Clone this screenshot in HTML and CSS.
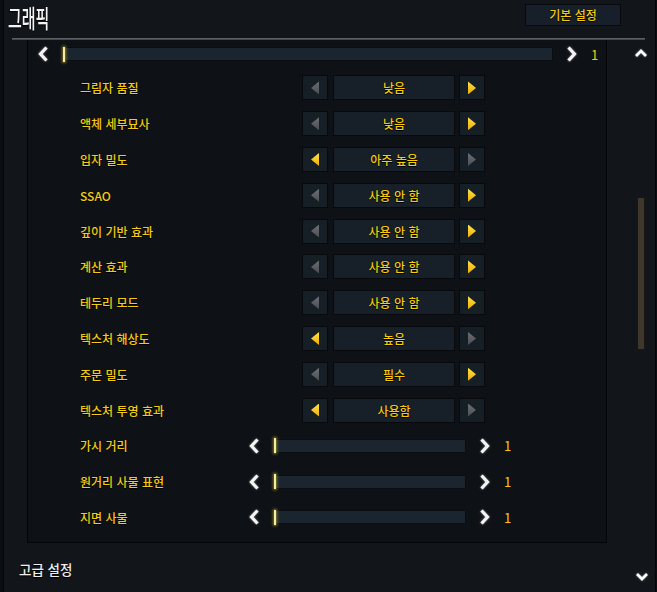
FILE: index.html
```html
<!DOCTYPE html>
<html lang="ko">
<head>
<meta charset="UTF-8">
<title>그래픽</title>
<link rel="stylesheet" href="styles.css">
</head>
<body>
<div class="window">
    <div class="header">
        <h1 class="title">그래픽</h1>
        <div class="btn-default">기본 설정</div>
    </div>
    <div class="rule"></div>

    <div class="main">
        <div class="panel">
            <div class="slider top">
                <svg class="chev" viewBox="0 0 10 16"><polyline points="8.5,1.5 2.5,8 8.5,14.5"/></svg>
                <div class="track wide"><span class="thumb"></span></div>
                <svg class="chev" viewBox="0 0 10 16"><polyline points="1.5,1.5 7.5,8 1.5,14.5"/></svg>
                <span class="num">1</span>
            </div>

            <div class="list">
                <div class="row">
                    <span class="label">그림자 품질</span>
                    <div class="sel-btn"><span class="tri left off"></span></div>
                    <div class="sel-value">낮음</div>
                    <div class="sel-btn"><span class="tri right"></span></div>
                </div>
                <div class="row">
                    <span class="label">액체 세부묘사</span>
                    <div class="sel-btn"><span class="tri left off"></span></div>
                    <div class="sel-value">낮음</div>
                    <div class="sel-btn"><span class="tri right"></span></div>
                </div>
                <div class="row">
                    <span class="label">입자 밀도</span>
                    <div class="sel-btn"><span class="tri left"></span></div>
                    <div class="sel-value">아주 높음</div>
                    <div class="sel-btn"><span class="tri right off"></span></div>
                </div>
                <div class="row">
                    <span class="label">SSAO</span>
                    <div class="sel-btn"><span class="tri left off"></span></div>
                    <div class="sel-value">사용 안 함</div>
                    <div class="sel-btn"><span class="tri right"></span></div>
                </div>
                <div class="row">
                    <span class="label">깊이 기반 효과</span>
                    <div class="sel-btn"><span class="tri left off"></span></div>
                    <div class="sel-value">사용 안 함</div>
                    <div class="sel-btn"><span class="tri right"></span></div>
                </div>
                <div class="row">
                    <span class="label">계산 효과</span>
                    <div class="sel-btn"><span class="tri left off"></span></div>
                    <div class="sel-value">사용 안 함</div>
                    <div class="sel-btn"><span class="tri right"></span></div>
                </div>
                <div class="row">
                    <span class="label">테두리 모드</span>
                    <div class="sel-btn"><span class="tri left off"></span></div>
                    <div class="sel-value">사용 안 함</div>
                    <div class="sel-btn"><span class="tri right"></span></div>
                </div>
                <div class="row">
                    <span class="label">텍스처 해상도</span>
                    <div class="sel-btn"><span class="tri left"></span></div>
                    <div class="sel-value">높음</div>
                    <div class="sel-btn"><span class="tri right off"></span></div>
                </div>
                <div class="row">
                    <span class="label">주문 밀도</span>
                    <div class="sel-btn"><span class="tri left off"></span></div>
                    <div class="sel-value">필수</div>
                    <div class="sel-btn"><span class="tri right"></span></div>
                </div>
                <div class="row">
                    <span class="label">텍스처 투영 효과</span>
                    <div class="sel-btn"><span class="tri left"></span></div>
                    <div class="sel-value">사용함</div>
                    <div class="sel-btn"><span class="tri right off"></span></div>
                </div>

                <!-- sliders -->
                <div class="row slider">
                    <span class="label short">가시 거리</span>
                    <svg class="chev" viewBox="0 0 10 16"><polyline points="8.5,1.5 2.5,8 8.5,14.5"/></svg>
                    <div class="track"><span class="thumb"></span></div>
                    <svg class="chev" viewBox="0 0 10 16"><polyline points="1.5,1.5 7.5,8 1.5,14.5"/></svg>
                    <span class="num">1</span>
                </div>
                <div class="row slider">
                    <span class="label short">원거리 사물 표현</span>
                    <svg class="chev" viewBox="0 0 10 16"><polyline points="8.5,1.5 2.5,8 8.5,14.5"/></svg>
                    <div class="track"><span class="thumb"></span></div>
                    <svg class="chev" viewBox="0 0 10 16"><polyline points="1.5,1.5 7.5,8 1.5,14.5"/></svg>
                    <span class="num">1</span>
                </div>
                <div class="row slider">
                    <span class="label short">지면 사물</span>
                    <svg class="chev" viewBox="0 0 10 16"><polyline points="8.5,1.5 2.5,8 8.5,14.5"/></svg>
                    <div class="track"><span class="thumb"></span></div>
                    <svg class="chev" viewBox="0 0 10 16"><polyline points="1.5,1.5 7.5,8 1.5,14.5"/></svg>
                    <span class="num">1</span>
                </div>
            </div>
        </div>

        <div class="scroll">
            <svg class="caret" viewBox="0 0 12 8"><polyline points="1,7 6,2 11,7"/></svg>
            <div class="scroll-thumb"></div>
        </div>
    </div>

    <div class="footer">
        <span class="advanced">고급 설정</span>
        <svg class="caret down" viewBox="0 0 12 8"><polyline points="1,1 6,6 11,1"/></svg>
    </div>
</div>
</body>
</html>
```

FILE: styles.css
```css
body, html {
    margin: 0;
    padding: 0;
}
body {
    width: 657px;
    height: 592px;
    overflow: hidden;
    background-color: #0b0d10;
    font-family: "Noto Sans CJK KR", "Noto Sans", sans-serif;
}
.window {
    margin-left: 3px;
    width: 651px;
    height: 592px;
    border-left: 1px solid #050607;
    border-right: 1px solid #050607;
    background-color: #12151a;
    display: flex;
    flex-direction: column;
}

/* HEADER */
.header {
    height: 38px;
    display: flex;
    justify-content: space-between;
    align-items: flex-start;
    padding: 0 34px 0 4px;
}
.title {
    margin: 3px 0 0 0;
    font-size: 25px;
    line-height: 28px;
    font-weight: 500;
    color: #f4f4f4;
    transform: scaleX(0.6);
    transform-origin: left center;
    text-shadow: 0 1px 1px #000;
}
.btn-default {
    margin-top: 4px;
    width: 94px;
    height: 20px;
    border: 1px solid #07090c;
    background-color: #17202a;
    color: #f6cc10;
    font-size: 12px;
    font-weight: 500;
    line-height: 20px;
    text-align: center;
    text-shadow: 0 0 1px #000, 0 1px 0 #000;
}
.rule {
    height: 2px;
    margin: 0 10px 0 8px;
    background: linear-gradient(#66696c, #3c3f42);
}

/* MAIN */
.main {
    display: flex;
    height: 503px;
}
.panel {
    margin-left: 23px;
    width: 578px;
    border: 1px solid #040506;
    border-top: none;
    background-color: #0e1115;
}
.scroll {
    flex: 1;
    display: flex;
    flex-direction: column;
    align-items: flex-start;
    padding: 9px 0 0 28px;
}
.caret {
    width: 12px;
    height: 8px;
    fill: none;
    stroke: #ffffff;
    stroke-width: 2.8;
    filter: drop-shadow(0 0 1px rgba(255, 255, 255, .4));
}
.scroll-thumb {
    margin: 140px 0 0 2px;
    width: 6px;
    height: 151px;
    border: 1px solid #1a1612;
    background-color: #3f362c;
}

/* SLIDERS */
.slider {
    display: flex;
    align-items: center;
    gap: 14px;
}
.slider.top {
    height: 28px;
    padding-left: 10px;
}
.chev {
    width: 10px;
    height: 16px;
    flex-shrink: 0;
    fill: none;
    stroke: #f4f4f4;
    stroke-width: 3.2;
    filter: drop-shadow(0 0 1px rgba(255, 255, 255, .5));
}
.track {
    width: 191px;
    height: 12px;
    border: 1px solid #0a0d11;
    background-color: #1b2530;
    display: flex;
    align-items: center;
}
.track.wide {
    width: 489px;
}
.thumb {
    width: 2px;
    height: 15px;
    background-color: #f6ee9a;
    box-shadow: 0 0 3px 1px rgba(230, 200, 60, .55);
}
.num {
    color: #f6cc10;
    font-size: 13px;
}

/* SELECT ROWS */
.list {
    margin-top: 2px;
    padding-left: 52px;
}
.row {
    height: 35.8px;
    display: flex;
    align-items: center;
}
.label {
    width: 222px;
    flex-shrink: 0;
    color: #f6cc10;
    font-size: 12px;
    font-weight: 500;
    text-shadow: 0 1px 0 #000;
}
.label.short {
    width: 169px;
    margin-right: -14px;
}
.sel-btn {
    width: 24px;
    height: 23px;
    border: 1px solid #07090c;
    background-color: #161e26;
    display: flex;
    justify-content: center;
    align-items: center;
}
.sel-value {
    width: 120px;
    height: 23px;
    margin: 0 4px 0 5px;
    border: 1px solid #07090c;
    background-color: #172029;
    color: #f6cc10;
    font-size: 12px;
    font-weight: 500;
    line-height: 23px;
    text-align: center;
    text-shadow: 0 0 1px #000, 0 1px 0 #000;
}
.tri {
    width: 8px;
    height: 13px;
    background: linear-gradient(#ffe24a, #f0ae00);
}
.tri.left {
    clip-path: polygon(0 50%, 100% 0, 100% 100%);
}
.tri.right {
    clip-path: polygon(0 0, 100% 50%, 0 100%);
}
.tri.off {
    background: linear-gradient(#6c7074, #4a4e52);
}

/* FOOTER */
.footer {
    flex: 1;
    display: flex;
    justify-content: space-between;
    align-items: flex-start;
    padding: 18px 7px 0 15px;
}
.advanced {
    color: #eeeeee;
    font-size: 13.5px;
    font-weight: 500;
    line-height: 16px;
    text-shadow: 0 1px 1px #000;
}
.caret.down {
    margin-top: 12px;
}
```
